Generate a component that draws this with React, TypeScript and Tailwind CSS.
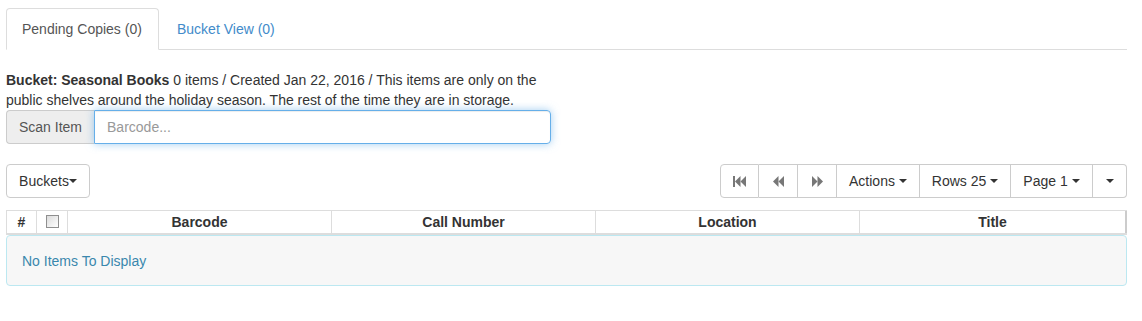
import React from 'react';

const Caret = () => (
    <span className="inline-block w-0 h-0 align-middle border-t-[4px] border-t-[#333] border-x-[4px] border-x-transparent" />
);

const FastBackward = () => (
    <svg width="13" height="11" viewBox="0 0 13 11" fill="#777">
        <rect x="0" y="0" width="2" height="11" />
        <polygon points="2,5.5 7.5,0 7.5,11" />
        <polygon points="7.5,5.5 13,0 13,11" />
    </svg>
);

const Backward = () => (
    <svg width="11" height="11" viewBox="0 0 11 11" fill="#777">
        <polygon points="0,5.5 5.5,0 5.5,11" />
        <polygon points="5.5,5.5 11,0 11,11" />
    </svg>
);

const Forward = () => (
    <svg width="11" height="11" viewBox="0 0 11 11" fill="#777">
        <polygon points="11,5.5 5.5,0 5.5,11" />
        <polygon points="5.5,5.5 0,0 0,11" />
    </svg>
);

const columns = ['Barcode', 'Call Number', 'Location', 'Title'];

const App = () => {
    return (
        <div
            className="w-[1142px] h-[321px] bg-white text-[14px] leading-[20px] text-[#333] pl-[6px] pt-[8px]"
            style={{ fontFamily: '"Liberation Sans", Arial, sans-serif' }}
        >
            <div className="w-[1121px]">
                {/* tabs */}
                <div className="flex border-b border-[#ddd] h-[42px]">
                    <div className="w-[153px] whitespace-nowrap px-[15px] py-[10px] h-[42px] border border-[#ddd] border-b-white bg-white rounded-t-[4px] text-[#555] mr-[2px]">
                        Pending Copies (0)
                    </div>
                    <div className="whitespace-nowrap px-[15px] py-[10px] h-[42px] border border-transparent text-[#428bca]">
                        Bucket View (0)
                    </div>
                </div>

                {/* bucket info */}
                <p className="mt-[20px] w-[550px]">
                    <b>Bucket: Seasonal Books</b>{' 0 items / Created Jan 22, 2016 / This items are only on the public shelves around the holiday season. The rest of the time they are in storage.'}
                </p>

                <div className="flex w-[545px] h-[34px]">
                    <span className="flex items-center whitespace-nowrap px-[12px] bg-[#eee] border border-[#ccc] border-r-0 rounded-l-[4px] text-[#555]">
                        Scan Item
                    </span>
                    <input
                        className="flex-1 min-w-0 h-[34px] px-[12px] border border-[#66afe9] rounded-r-[4px] outline-none text-[#555] placeholder:text-[#999] shadow-[inset_0_1px_1px_rgba(0,0,0,0.075),0_0_8px_rgba(102,175,233,0.6)]"
                        placeholder="Barcode..."
                    />
                </div>

                {/* toolbar */}
                <div className="flex justify-between mt-[20px] h-[34px]">
                    <button className="w-[84px] h-[34px] px-[12px] border border-[#ccc] rounded-[4px] bg-white text-[#333] flex items-center justify-center">
                        Buckets<Caret />
                    </button>
                    <div className="flex h-[34px]">
                        <button className="w-[39px] flex items-center justify-center border border-[#ccc] rounded-l-[4px] bg-white">
                            <FastBackward />
                        </button>
                        <button className="w-[39px] flex items-center justify-center border border-[#ccc] border-l-0 bg-white">
                            <Backward />
                        </button>
                        <button className="w-[39px] flex items-center justify-center border border-[#ccc] border-l-0 bg-white">
                            <Forward />
                        </button>
                        <button className="w-[83px] flex items-center justify-center gap-[4px] border border-[#ccc] border-l-0 bg-white">
                            Actions <Caret />
                        </button>
                        <button className="w-[91px] flex items-center justify-center gap-[4px] border border-[#ccc] border-l-0 bg-white">
                            Rows 25 <Caret />
                        </button>
                        <button className="w-[82px] flex items-center justify-center gap-[4px] border border-[#ccc] border-l-0 bg-white">
                            Page 1 <Caret />
                        </button>
                        <button className="w-[34px] flex items-center justify-center border border-[#ccc] border-l-0 rounded-r-[4px] bg-white">
                            <Caret />
                        </button>
                    </div>
                </div>

                {/* table header */}
                <div className="mt-[12px] flex h-[25px] border-t border-b-2 border-[#ddd] font-bold">
                    <div className="w-[31px] border-l border-r border-[#ddd] flex items-center justify-center">#</div>
                    <div className="w-[31px] border-r border-[#ddd] flex items-start justify-center pt-[4px]">
                        <span className="block w-[13px] h-[13px] border border-[#8f8f8f] bg-gradient-to-br from-[#dcdcdc] to-white" />
                    </div>
                    {columns.map((c, i) => (
                        <div
                            key={c}
                            className={
                                i === columns.length - 1
                                    ? 'flex-1 border-r-2 border-[#ccc] flex items-center justify-center'
                                    : 'w-[264px] border-r border-[#ddd] flex items-center justify-center'
                            }
                        >
                            {c}
                        </div>
                    ))}
                </div>

                {/* empty */}
                <div className="h-[51px] border border-[#bce8f1] rounded-[4px] bg-[#f7f7f7] px-[15px] flex items-center text-[#3a87ad]">
                    No Items To Display
                </div>
            </div>
        </div>
    );
};

export default App;
